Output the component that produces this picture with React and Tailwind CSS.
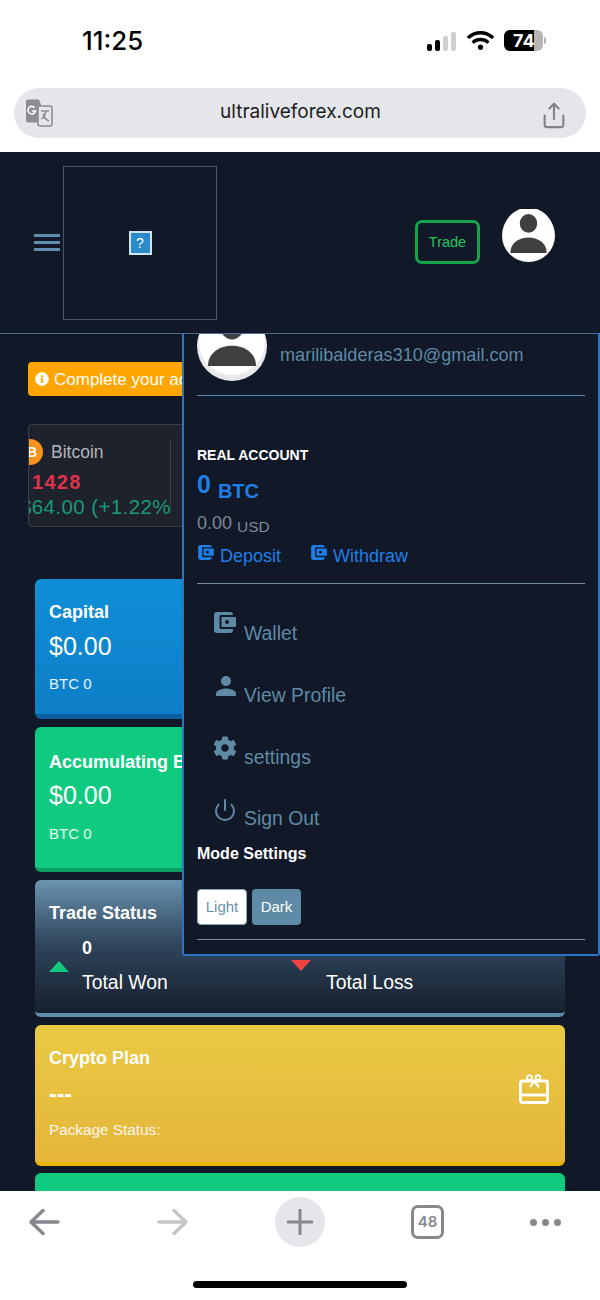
import React from "react";
import { FaCog, FaInfoCircle, FaWifi } from "react-icons/fa";
import { MdPerson } from "react-icons/md";
import { FiPower } from "react-icons/fi";
import { Share } from "lucide-react";

const sans = "font-['Liberation_Sans',Arial,sans-serif]";

function Avatar({ className, lift = 0, rim = "#fff" }) {
  return (
    <svg viewBox="0 0 70 70" className={className}>
      <circle cx="35" cy="35" r="35" fill={rim} />
      <circle cx="35" cy="31" r="33" fill="#fff" />
      <g transform={`translate(0 ${-lift})`}>
        <ellipse cx="35" cy="19" rx="11.5" ry="12.5" fill="#3f3f3f" />
        <path d="M11 58 C11 31 59 31 59 58 Z" fill="#3f3f3f" />
      </g>
    </svg>
  );
}

// wallet glyph: solid body with a framed clasp on the right
function WalletIcon({ className, color }) {
  return (
    <svg viewBox="0 0 22 21" className={className}>
      <rect x="0" y="0" width="19" height="21" rx="3" fill={color} />
      <rect x="5.5" y="3" width="16.5" height="14" rx="1.5" fill="#111827" />
      <rect x="7.5" y="5" width="14.5" height="10" rx="1" fill={color} />
      <circle cx="13" cy="10" r="2" fill="#111827" />
    </svg>
  );
}

function StatusBar() {
  return (
    <div className="h-[88px] shrink-0 flex items-start pt-[26px] bg-white text-black">
      <div className="ml-[82px] text-[25.8px] leading-[30px] font-medium font-['Inter',sans-serif]">11:25</div>
      <div className="ml-auto flex items-center mt-[-1px] h-[30px]">
        <div className="flex items-end gap-[3px] h-[19px] mt-[2px]">
          <div className="w-[5px] h-[7px] rounded-[2px] bg-black" />
          <div className="w-[5px] h-[11px] rounded-[2px] bg-black" />
          <div className="w-[5px] h-[15px] rounded-[2px] bg-[#cfcfcf]" />
          <div className="w-[5px] h-[19px] rounded-[2px] bg-[#cfcfcf]" />
        </div>
        <FaWifi className="ml-[11px] text-[27px]" />
        <div className="ml-[10px] relative w-[39px] h-[21px] rounded-[6px] overflow-hidden bg-[#b5b5b5] flex">
          <div className="w-[30px] bg-black" />
          <span className="absolute left-[9px] top-0 text-white text-[18px] leading-[21px] font-bold font-['Inter',sans-serif]">74</span>
        </div>
        <div className="ml-[1px] mr-[54px] w-[2px] h-[7px] rounded-r bg-[#b5b5b5]" />
      </div>
    </div>
  );
}

function TranslateIcon() {
  return (
    <svg viewBox="0 0 28 28" className="w-[28px] h-[28px]">
      <path d="M3 0.5h11l9 23h-20a2 2 0 0 1-2-2v-19a2 2 0 0 1 2-2z" fill="#8a8d91" />
      <path d="M9.6 8.6a3.8 3.8 0 1 0 0.9 3.4h-3.6" fill="none" stroke="#fff" strokeWidth="1.6" />
      <rect x="13" y="7" width="14" height="20" rx="2" fill="#e4e6e9" stroke="#8a8d91" strokeWidth="1.6" />
      <path d="M16 12h8M21 12c-1 5-2.5 7-4.5 8M18 15c1 3 3.5 6 6 7" fill="none" stroke="#8a8d91" strokeWidth="1.6" />
    </svg>
  );
}

function UrlBar() {
  return (
    <div className="h-[64px] shrink-0 bg-white px-[14px]">
      <div className="h-[50px] rounded-[25px] bg-[#e4e6e9] flex items-center pl-[11px] pr-[18px]">
        <TranslateIcon />
        <div className="flex-1 pl-[8px] mt-[-2px] text-center text-[19px] text-[#1c1c1e] font-['Inter',sans-serif]">ultraliveforex.com</div>
        <Share className="w-[28px] h-[31px] text-[#7f8286] mt-[4px]" strokeWidth={1.8} />
      </div>
    </div>
  );
}

function NavBar() {
  return (
    <div className="h-[182px] shrink-0 border-b border-[#4b6f92] flex items-center pl-[34px] relative z-20 bg-[#111827]">
      <div className="w-[26px] flex flex-col gap-[4px] mr-[3px]">
        <div className="h-[3px] bg-[#5f8fb0]" />
        <div className="h-[3px] bg-[#5f8fb0]" />
        <div className="h-[3px] bg-[#5f8fb0]" />
      </div>
      <div className="w-[154px] h-[154px] border border-[#4b5563] flex items-center justify-center">
        <div className="w-[23px] h-[24px] border-2 border-[#cfe3f0] bg-[#2a8bca] text-white text-[14px] leading-[20px] text-center">?</div>
      </div>
      <div className="ml-[198px] mt-[-1px] pt-[1px] w-[65px] h-[44px] rounded-[7px] border-[3px] border-[#16a34a] text-[#22c55e] text-[14.5px] flex items-center justify-center">Trade</div>
      <Avatar className="ml-[22px] w-[53px] h-[53px] mt-[-15px]" />
    </div>
  );
}

function Ticker() {
  return (
    <div className="mt-[28px] ml-[28px] w-[300px] h-[103px] rounded-[4px] border border-[#3a3f4a] bg-[#1e222d] overflow-hidden">
      <div className="relative mt-[14px] w-[142px] h-[88px] overflow-hidden">
        <div className="absolute right-0 top-0 w-px h-[74px] bg-[#3a3f4a]" />
        <div className="flex items-center h-[26px]">
          <div className="ml-[-12px] w-[26px] h-[26px] shrink-0 rounded-full bg-[#f7931a] text-white text-[14px] font-bold leading-[26px] text-right pr-[6px]">B</div>
          <span className="ml-[8px] text-[17.5px] text-[#b2b5be]">Bitcoin</span>
        </div>
        <div className="mt-[4px] ml-[3px] text-[20px] leading-[26px] font-bold tracking-[1.3px] text-[#e0314b]">1428</div>
        <div className="ml-[-9px] text-[20.5px] leading-[24px] whitespace-nowrap text-[#1a9a76] tracking-[0.4px]">$64.00 (+1.22%)</div>
      </div>
    </div>
  );
}

function StatCard({ title, bg, children }) {
  return (
    <div className={`${bg} mx-[35px] rounded-[6px] px-[14px] text-white`}>
      <div className="text-[18px] leading-[22px] font-bold">{title}</div>
      {children}
    </div>
  );
}

function GiftIcon() {
  return (
    <svg viewBox="0 0 30 30" className="w-[30px] h-[30px]" fill="none" stroke="#fff" strokeWidth="2.8">
      <rect x="1.5" y="7" width="27" height="21.5" rx="2" />
      <path d="M1.5 21h27" />
      <path d="M15 7l-4 6M15 7l5 6" strokeWidth="2.2" />
      <circle cx="10.5" cy="3.5" r="2.4" strokeWidth="1.8" />
      <circle cx="19" cy="3.5" r="2.4" strokeWidth="1.8" />
    </svg>
  );
}

function MainContent() {
  return (
    <div className="flex-1 overflow-hidden bg-[#111827]">
      <div className="mt-[28px] ml-[28px] pt-[2px] w-[544px] h-[34px] rounded-[4px] bg-[#ffa500] text-white text-[17px] flex items-center pl-[7px] gap-[5px]">
        <FaInfoCircle className="text-[14px] mt-[-2px]" />
        Complete your account verification
      </div>
      <Ticker />
      <div className="mt-[52px] flex flex-col">
        <StatCard title="Capital" bg="h-[140px] pt-[22px] bg-gradient-to-b from-[#0f8fd6] to-[#0d7ec8] border-b-[5px] border-[#0a5f9e]">
          <div className="mt-[8px] text-[25px] leading-[30px]">$0.00</div>
          <div className="mt-[14px] text-[15px] leading-[18px] text-white/90">BTC 0</div>
        </StatCard>
        <div className="h-[8px]" />
        <StatCard title="Accumulating Balance" bg="h-[145px] pt-[24px] bg-[#10cb7f] border-b-[4px] border-[#0e9f66]">
          <div className="mt-[7px] text-[25px] leading-[30px]">$0.00</div>
          <div className="mt-[15px] text-[15px] leading-[18px] text-white/90">BTC 0</div>
        </StatCard>
        <div className="h-[8px]" />
        <StatCard title="Trade Status" bg="h-[137px] pt-[22px] bg-gradient-to-b from-[#6a94b0] via-[#2e4359] to-[#16202f] border-b-[4px] border-[#5f8ca8]">
          <div className="flex mt-[12px]">
            <div className="w-[242px] flex">
              <div className="mt-[25px] w-0 h-0 border-x-[10px] border-x-transparent border-b-[11px] border-b-[#10cb7f]" />
              <div className="ml-[13px]">
                <div className="text-[18px] leading-[24px] font-bold">0</div>
                <div className="mt-[10px] text-[19.4px] leading-[24px]">Total Won</div>
              </div>
            </div>
            <div className="flex">
              <div className="mt-[24px] w-0 h-0 border-x-[10px] border-x-transparent border-t-[11px] border-t-[#ef4444]" />
              <div className="ml-[15px]">
                <div className="text-[18px] leading-[24px] font-bold">0</div>
                <div className="mt-[10px] text-[19.4px] leading-[24px]">Total Loss</div>
              </div>
            </div>
          </div>
        </StatCard>
        <div className="h-[8px]" />
        <StatCard title="Crypto Plan" bg="h-[141px] pt-[22px] bg-gradient-to-b from-[#e9ca44] to-[#e5b53a] border-b-[4px] border-[#eab308] relative">
          <div className="mt-[13px] text-[23px] leading-[24px] font-bold">---</div>
          <div className="mt-[15px] text-[15.3px] leading-[18px] text-white/90">Package Status:</div>
          <div className="absolute right-[16px] top-[49px]"><GiftIcon /></div>
        </StatCard>
        <div className="h-[7px]" />
        <div className="mx-[35px] h-[60px] rounded-t-[6px] bg-[#10cb7f]" />
      </div>
    </div>
  );
}

function MenuRow({ icon, label, rowClass }) {
  return (
    <div className={`flex ml-[17px] text-[#5f8aa6] ${rowClass}`}>
      <div className="w-[30px] text-[24px] flex justify-start h-[30px] pt-[2px]">{icon}</div>
      <div className="text-[19.4px] leading-[24px] mt-[11px]">{label}</div>
    </div>
  );
}

function ProfileDropdown() {
  return (
    <div className="absolute left-[182px] top-[334px] w-[418px] h-[622px] z-10 border-2 border-t-0 border-[#2b74c4] rounded-b-[3px] bg-[#111827] pl-[13px] pr-[13px] overflow-hidden">
      <div className="flex items-start mt-[-23px]">
        <Avatar className="w-[70px] h-[70px] shrink-0" lift={3} rim="#e9e9ec" />
        <div className="ml-[13px] mt-[32px] text-[18.1px] leading-[24px] text-[#5f8aa6]">marilibalderas310@gmail.com</div>
      </div>
      <div className="mt-[14px] h-[1px] bg-[#4f8ab5]" />
      <div className="mt-[51px] text-[14px] leading-[17px] font-bold text-white">REAL ACCOUNT</div>
      <div className="mt-[5px] h-[30px] flex items-end text-[#1f7fe8] font-bold">
        <span className="text-[25px] leading-[30px]">0</span>
        <span className="ml-[7px] text-[20px] leading-[24px] mb-[-4px]">BTC</span>
      </div>
      <div className="mt-[11px] h-[24px] flex items-end text-[#7c8a99]">
        <span className="text-[18px] leading-[22px]">0.00</span>
        <span className="ml-[5px] text-[15.5px] leading-[18px] mb-[-2px]">USD</span>
      </div>
      <div className="mt-[10px] flex text-[#1f7fe8] text-[18px] leading-[24px]">
        <WalletIcon className="w-[16px] h-[15px] ml-[1px] mt-[1px]" color="#1f7fe8" />
        <span className="ml-[6px]">Deposit</span>
        <WalletIcon className="w-[16px] h-[15px] ml-[30px] mt-[1px]" color="#1f7fe8" />
        <span className="ml-[6px]">Withdraw</span>
      </div>
      <div className="mt-[15px] h-[1px] bg-[#7a8b9a]" />
      <MenuRow rowClass="mt-[26px]" icon={<WalletIcon className="w-[22px] h-[21px]" color="#5f8aa6" />} label="Wallet" />
      <MenuRow rowClass="mt-[27px]" icon={<MdPerson className="text-[30px] ml-[-3px] mt-[-3px] shrink-0" />} label="View Profile" />
      <MenuRow rowClass="mt-[27px]" icon={<FaCog className="ml-[-1px]" />} label="settings" />
      <MenuRow rowClass="mt-[26px]" icon={<FiPower className="ml-[-1px] mt-[1px]" />} label="Sign Out" />
      <div className="mt-[14px] text-[16px] leading-[20px] font-bold text-white">Mode Settings</div>
      <div className="mt-[25px] flex gap-[5px]">
        <div className="w-[50px] h-[36px] rounded-[4px] border border-[#8aa5b8] bg-white text-[#6b93ad] text-[15px] flex items-center justify-center">Light</div>
        <div className="w-[49px] h-[36px] rounded-[4px] bg-[#5f8aa6] text-white text-[15px] flex items-center justify-center">Dark</div>
      </div>
      <div className="mt-[14px] h-[1px] bg-[#7a8b9a]" />
    </div>
  );
}

function BottomBar() {
  return (
    <div className="h-[109px] shrink-0 bg-white relative z-20">
      <div className="flex items-center h-[50px] mt-[6px] pl-[29px] pt-[0px] text-[#85888c]">
        <svg viewBox="0 0 31 30" className="w-[31px] h-[30px]" fill="none" stroke="#85888c" strokeWidth="3.4" strokeLinecap="round" strokeLinejoin="round">
          <path d="M2 15h27M14 3.5L2 15l12 11.5" />
        </svg>
        <svg viewBox="0 0 31 30" className="ml-[97px] w-[31px] h-[30px]" fill="none" stroke="#c4c5c7" strokeWidth="3.4" strokeLinecap="round" strokeLinejoin="round">
          <path d="M2 15h27M17 3.5L29 15 17 26.5" />
        </svg>
        <div className="ml-[87px] w-[50px] h-[50px] rounded-full bg-[#e4e6e9] flex items-center justify-center">
          <svg viewBox="0 0 26 26" className="w-[26px] h-[26px]" fill="none" stroke="#85888c" strokeWidth="3" strokeLinecap="round">
            <path d="M13 1v24M1 13h24" />
          </svg>
        </div>
        <div className="ml-[86px] w-[33px] h-[34px] rounded-[7px] border-[3px] border-[#85888c] flex items-center justify-center text-[15px] font-semibold font-['Inter',sans-serif]">48</div>
        <div className="ml-[86px] flex gap-[5px]">
          <div className="w-[7px] h-[7px] rounded-full bg-[#85888c]" />
          <div className="w-[7px] h-[7px] rounded-full bg-[#85888c]" />
          <div className="w-[7px] h-[7px] rounded-full bg-[#85888c]" />
        </div>
      </div>
      <div className="mt-[34px] mx-auto w-[214px] h-[7px] rounded-full bg-black" />
    </div>
  );
}

export default function App() {
  return (
    <div className={`relative w-[600px] h-[1300px] overflow-hidden flex flex-col bg-white ${sans}`}>
      <StatusBar />
      <UrlBar />
      <NavBar />
      <MainContent />
      <ProfileDropdown />
      <BottomBar />
    </div>
  );
}
